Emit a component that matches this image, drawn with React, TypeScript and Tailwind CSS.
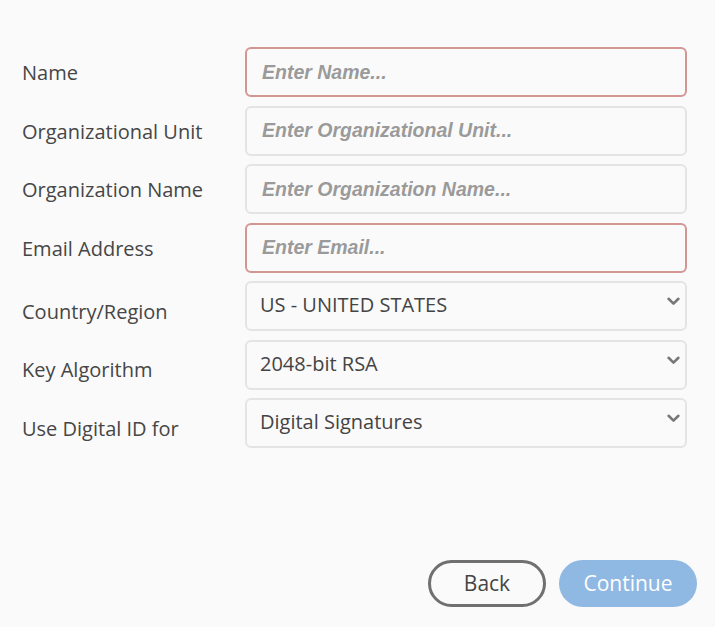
import { useState } from "react";

const labelFont = { fontFamily: '"Open Sans", "Noto Sans", sans-serif' };

function Chevron() {
    return (
        <svg className="absolute right-[7px] top-[16px] w-[13px] h-[9px]" viewBox="0 0 13 9" fill="none">
            <path d="M1.6 1.8 L6.5 6.6 L11.4 1.8" stroke="#777" strokeWidth="2.6" strokeLinecap="round" strokeLinejoin="round" />
        </svg>
    );
}

interface TextRow { label: string; placeholder: string; required: boolean; }
interface SelectRow { label: string; value: string; options: string[]; }

const textRows: TextRow[] = [
    { label: "Name", placeholder: "Enter Name...", required: true },
    { label: "Organizational Unit", placeholder: "Enter Organizational Unit...", required: false },
    { label: "Organization Name", placeholder: "Enter Organization Name...", required: false },
    { label: "Email Address", placeholder: "Enter Email...", required: true },
];

const selectRows: SelectRow[] = [
    { label: "Country/Region", value: "US - UNITED STATES", options: ["US - UNITED STATES", "CA - CANADA", "GB - UNITED KINGDOM"] },
    { label: "Key Algorithm", value: "2048-bit RSA", options: ["1024-bit RSA", "2048-bit RSA", "384-bit ECC"] },
    { label: "Use Digital ID for", value: "Digital Signatures", options: ["Digital Signatures", "Data Encryption", "Digital Signatures and Data Encryption"] },
];

export default function App() {
    const [values, setValues] = useState<Record<string, string>>({});
    const [choices, setChoices] = useState<Record<string, string>>(
        Object.fromEntries(selectRows.map(r => [r.label, r.value]))
    );

    return (
        <div className="w-[715px] h-[627px] bg-[#fafafa] flex flex-col overflow-hidden">
            <div className="flex flex-col gap-[8.5px] pl-[22px] pr-[28px] pt-[47px]">
                {textRows.map(row => (
                    <div key={row.label} className="flex items-center h-[50px]">
                        <div className="w-[223px] pt-[2px] text-[20px] text-[#464646]" style={labelFont}>{row.label}</div>
                        <input
                            type="text"
                            placeholder={row.placeholder}
                            value={values[row.label] ?? ""}
                            onChange={e => setValues({ ...values, [row.label]: e.target.value })}
                            className={`flex-1 h-[50px] rounded-[6px] border-2 bg-[#fafafa] px-[15px] text-[19.5px] text-[#444] placeholder:text-[#9a9a9a] placeholder:italic placeholder:font-bold focus:outline-none ${row.required ? "border-[#d49595]" : "border-[#e4e4e4]"}`}
                            style={{ fontFamily: '"Liberation Sans", Arial, sans-serif' }}
                        />
                    </div>
                ))}
                {selectRows.map(row => (
                    <div key={row.label} className="flex items-center h-[50px]">
                        <div className="w-[223px] pt-[11px] text-[20px] text-[#464646]" style={labelFont}>{row.label}</div>
                        <div className="relative flex-1 h-[50px]">
                            <select
                                value={choices[row.label]}
                                onChange={e => setChoices({ ...choices, [row.label]: e.target.value })}
                                className="appearance-none w-full h-full rounded-[6px] border-2 border-[#e4e4e4] bg-[#fafafa] pl-[13px] pr-[30px] pb-[2px] text-[20px] text-[#444] focus:outline-none"
                                style={labelFont}
                            >
                                {row.options.map(o => <option key={o}>{o}</option>)}
                            </select>
                            <Chevron />
                        </div>
                    </div>
                ))}
            </div>

            <div className="flex justify-end gap-[13px] pr-[18px] mt-[112px]">
                <button
                    className="w-[118px] h-[47px] rounded-full border-[3px] border-[#707070] bg-transparent text-[21px] text-[#444]"
                    style={labelFont}
                >
                    Back
                </button>
                <button
                    className="w-[138px] h-[47px] rounded-full bg-[#8fb8e3] text-[21px] text-white"
                    style={labelFont}
                >
                    Continue
                </button>
            </div>
        </div>
    );
}
